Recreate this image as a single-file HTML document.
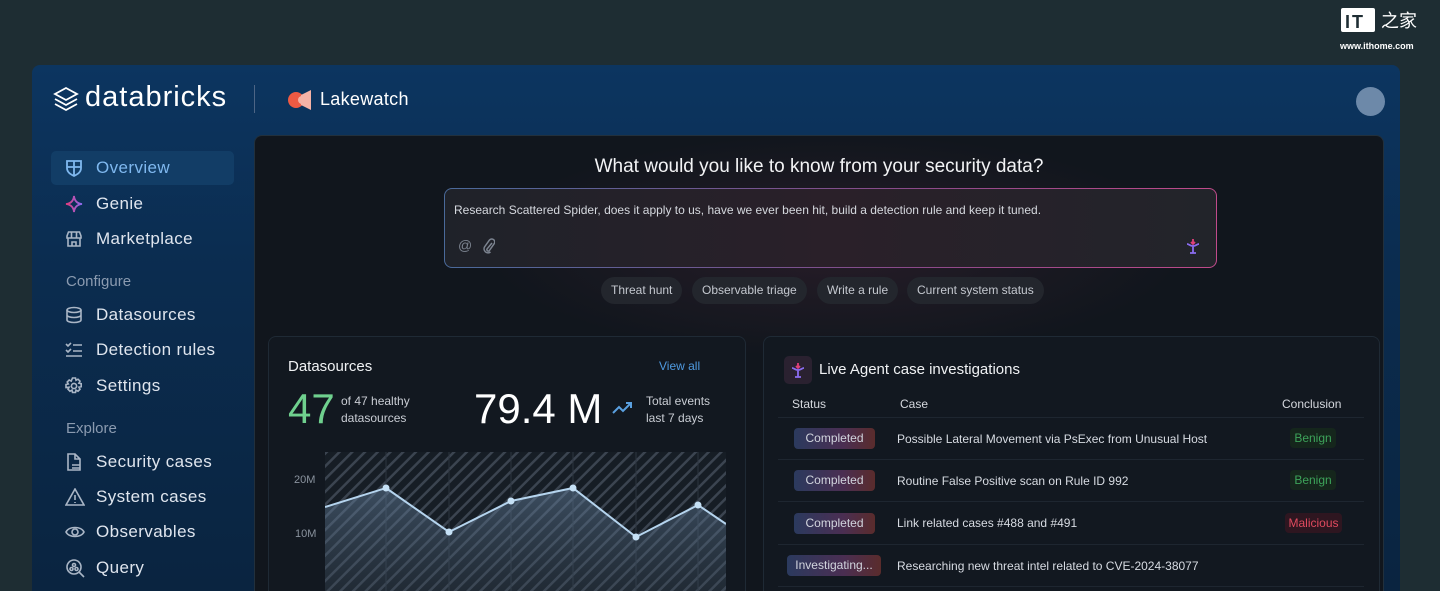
<!DOCTYPE html>
<html><head><meta charset="utf-8"><style>
*{margin:0;padding:0;box-sizing:border-box}
html,body{width:1440px;height:591px;overflow:hidden}
body{background:#1e2d33;font-family:"Liberation Sans",sans-serif;position:relative;color:#e6e9ee}
.panel{position:absolute;left:32px;top:65px;width:1368px;height:526px;border-radius:8px 8px 0 0;background:linear-gradient(180deg,#0c3560 0%,#0b2c4f 40%,#0a2440 100%)}
.abs{position:absolute}
.nav{position:absolute;left:51px;width:183px;height:34px;display:flex;align-items:center;font-size:17px;color:#dfe5ee;letter-spacing:.4px}
.nav svg{position:absolute;left:14px}
.nav span{position:absolute;left:45px}
.sec{position:absolute;left:66px;font-size:15px;color:#8b9bb0}
.main{position:absolute;left:254px;top:135px;width:1130px;height:456px;border-radius:8px 8px 0 0;background:radial-gradient(ellipse 500px 160px at 580px 110px,rgba(80,40,60,.35),transparent 70%),#11161d;border:1px solid #22303c;border-bottom:none}
.card{position:absolute;border-radius:8px 8px 0 0;border:1px solid #1f2a35;border-bottom:none;background:#121820}
.chip{position:absolute;top:277px;height:27px;border-radius:14px;background:#23262d;color:#c4c8cf;font-size:12px;line-height:27px;padding:0 10px}
.st{position:absolute;height:21px;border-radius:4px;font-size:12px;line-height:21px;text-align:center;color:#d2d5de;background:linear-gradient(90deg,#2b3a5e,#4a2e52 60%,#5a2c2c)}
.row{position:absolute;left:897px;font-size:12px;color:#d7dbe2}
.con{position:absolute;height:20px;line-height:20px;font-size:12px;border-radius:4px;text-align:center}
.hr{position:absolute;left:778px;width:586px;height:1px;background:#1e2630}
</style></head><body>
<div class="panel"></div>
<div class="abs" style="left:1341px;top:8px;width:34px;height:24px;background:#fff;border-radius:2px"></div>
<div class="abs" style="left:1345px;top:12px;font:bold 18px 'Liberation Sans';color:#1e2d33;letter-spacing:2px">IT</div>
<div class="abs" style="left:1381px;top:9px;font:18px 'Noto Sans CJK SC',sans-serif;color:#fff;line-height:22px">之家</div>
<div class="abs" style="left:1340px;top:41px;font:bold 9px 'Liberation Sans';color:#fff">www.ithome.com</div>
<svg class="abs" style="left:53px;top:86px" width="26" height="26" viewBox="0 0 26 26" fill="none" stroke="#fff" stroke-width="1.8"><path d="M13 2 24 8 13 14 2 8Z"/><path d="M2 13l11 6 11-6M2 18l11 6 11-6"/></svg>
<div class="abs" style="left:85px;top:81px;font-size:29px;color:#fff;letter-spacing:1px">databricks</div>
<div class="abs" style="left:254px;top:85px;width:1px;height:28px;background:#4d6585"></div>
<svg class="abs" style="left:287px;top:89px" width="26" height="22" viewBox="0 0 26 22"><circle cx="9" cy="11" r="8" fill="#ef5a43"/><path d="M14 6 24 1V21L14 16Z" fill="#f6b3a6"/><circle cx="15" cy="11" r="4" fill="#f6b3a6"/></svg>
<div class="abs" style="left:320px;top:89px;font-size:18px;color:#fff;letter-spacing:.3px">Lakewatch</div>
<div class="abs" style="left:1356px;top:87px;width:29px;height:29px;border-radius:50%;background:#6d89a9"></div>
<div class="nav" style="top:151px;background:#123d66;border-radius:5px;color:#7fb8ef"><svg width="18" height="18" viewBox="0 0 18 18" fill="none" stroke="#7fb8ef" stroke-width="1.8"><path d="M2 2h14v7c0 4-3 6-7 8-4-2-7-4-7-8Z M9 2v15 M2 8h14"/></svg><span>Overview</span></div>
<div class="nav" style="top:187px"><svg width="18" height="18" viewBox="0 0 18 18" fill="none" stroke-width="1.8"><defs><linearGradient id="g"><stop offset="0" stop-color="#e03a7a"/><stop offset="1" stop-color="#8a6cf0"/></linearGradient></defs><path d="M9 1C9.5 6 12 8.5 17 9 12 9.5 9.5 12 9 17 8.5 12 6 9.5 1 9 6 8.5 8.5 6 9 1Z" stroke="url(#g)"/></svg><span>Genie</span></div>
<div class="nav" style="top:222px"><svg width="18" height="18" viewBox="0 0 18 18" fill="none" stroke="#aab6c6" stroke-width="1.6"><path d="M2 6 3.5 2h11L16 6v2H2Z M3 8v8h12V8 M7 16v-4h4v4 M6.5 2v6 M11.5 2v6"/></svg><span>Marketplace</span></div>
<div class="sec" style="top:273px">Configure</div>
<div class="nav" style="top:298px"><svg width="18" height="18" viewBox="0 0 18 18" fill="none" stroke="#aab6c6" stroke-width="1.6"><ellipse cx="9" cy="4" rx="7" ry="2.5"/><path d="M2 4v10c0 1.4 3 2.5 7 2.5s7-1.1 7-2.5V4M2 9c0 1.4 3 2.5 7 2.5S16 10.4 16 9"/></svg><span>Datasources</span></div>
<div class="nav" style="top:333px"><svg width="18" height="18" viewBox="0 0 18 18" fill="none" stroke="#aab6c6" stroke-width="1.6"><path d="M1 3l2 2 3-3M1 9l2 2 3-3M8 4h9M8 10h9M1 15h16"/></svg><span>Detection rules</span></div>
<div class="nav" style="top:369px"><svg width="18" height="18" viewBox="0 0 18 18" fill="none" stroke="#aab6c6" stroke-width="1.6"><circle cx="9" cy="9" r="2.6"/><path d="M7.5 1h3l.5 2.3 2-1.1 2 2-1.1 2 2.3.5v3l-2.3.5 1.1 2-2 2-2-1.1-.5 2.3h-3l-.5-2.3-2 1.1-2-2 1.1-2L1 10.5v-3l2.3-.5-1.1-2 2-2 2 1.1Z"/></svg><span>Settings</span></div>
<div class="sec" style="top:420px">Explore</div>
<div class="nav" style="top:445px"><svg width="18" height="18" viewBox="0 0 18 18" fill="none" stroke="#aab6c6" stroke-width="1.6"><path d="M3 17V1h7l5 5v11Z M10 1v5h5 M7 12h8M7 15h8"/></svg><span>Security cases</span></div>
<div class="nav" style="top:480px"><svg width="20" height="18" viewBox="0 0 20 18" fill="none" stroke="#aab6c6" stroke-width="1.6"><path d="M10 1 19 17H1Z M10 7v5M10 14v1"/></svg><span>System cases</span></div>
<div class="nav" style="top:515px"><svg width="20" height="18" viewBox="0 0 20 18" fill="none" stroke="#aab6c6" stroke-width="1.6"><path d="M1 9C4 3 16 3 19 9 16 15 4 15 1 9Z"/><circle cx="10" cy="9" r="3"/></svg><span>Observables</span></div>
<div class="nav" style="top:551px"><svg width="20" height="20" viewBox="0 0 20 20" fill="none" stroke="#aab6c6" stroke-width="1.6"><circle cx="9" cy="9" r="7"/><path d="M14 14l5 5"/><circle cx="9" cy="7" r="1.5"/><circle cx="6.5" cy="11" r="1.5"/><circle cx="11.5" cy="11" r="1.5"/></svg><span>Query</span></div>
<div class="main"></div>
<div class="abs" style="left:254px;width:1130px;top:156px;text-align:center;font-size:19px;color:#f2f3f5">What would you like to know from your security data?</div>
<div class="abs" style="left:444px;top:188px;width:773px;height:80px;border-radius:8px;padding:1px;background:linear-gradient(90deg,#4a6a9a,#8a4a8a 60%,#c04a8a)"><div style="width:100%;height:100%;border-radius:7px;background:linear-gradient(90deg,#1f2229,#2a2029 50%,#22242a)"></div></div>
<div class="abs" style="left:454px;top:203px;font-size:12px;color:#d5d8de">Research Scattered Spider, does it apply to us, have we ever been hit, build a detection rule and keep it tuned.</div>
<div class="abs" style="left:458px;top:237px;font-size:14px;color:#7c8490">@</div>
<svg class="abs" style="left:483px;top:238px" width="12" height="16" viewBox="0 0 12 16" fill="none" stroke="#7c8490" stroke-width="1.5"><path d="M9 5 4 11a1.5 1.5 0 0 0 2 2l5-7a3 3 0 0 0-4.5-4L1.5 9a4 4 0 0 0 6 5"/></svg>
<svg class="abs" style="left:1185px;top:238px" width="16" height="16" viewBox="0 0 16 16" fill="none" stroke-width="1.8"><path d="M2 6c2 0 3 2 6 2s4-2 6-2M8 8v7M5 15h6" stroke="#8a6cf0"/><path d="M8 1v5M6 4l2 2 2-2" stroke="#e0407a"/></svg>
<div class="chip" style="left:601px">Threat hunt</div>
<div class="chip" style="left:692px">Observable triage</div>
<div class="chip" style="left:817px">Write a rule</div>
<div class="chip" style="left:907px">Current system status</div>
<div class="card" style="left:268px;top:336px;width:478px;height:255px"></div>
<div class="abs" style="left:288px;top:358px;font-size:15px;color:#f0f2f4">Datasources</div>
<div class="abs" style="left:659px;top:359px;font-size:12px;color:#4f9ae0">View all</div>
<div class="abs" style="left:288px;top:386px;font-size:42px;color:#6fd08e;line-height:46px">47</div>
<div class="abs" style="left:341px;top:393px;font-size:12px;color:#c9cdd4;line-height:17px">of 47 healthy<br>datasources</div>
<div class="abs" style="left:474px;top:386px;font-size:42px;color:#fff;line-height:46px">79.4 M</div>
<svg class="abs" style="left:612px;top:401px" width="22" height="14" viewBox="0 0 22 14" fill="none" stroke="#5aa0e0" stroke-width="2"><path d="M1 12 7 6l4 4 8-8M14 2h5v5"/></svg>
<div class="abs" style="left:646px;top:393px;font-size:12px;color:#c9cdd4;line-height:17px">Total events<br>last 7 days</div>
<div class="abs" style="left:294px;top:474px;font-size:11px;color:#8a939e">20M</div>
<div class="abs" style="left:295px;top:528px;font-size:11px;color:#8a939e">10M</div>
<svg class="abs" style="left:325px;top:452px" width="401" height="139" viewBox="0 0 401 139">
<defs><pattern id="h" width="9" height="9" patternUnits="userSpaceOnUse" patternTransform="rotate(45)"><rect width="9" height="9" fill="#161d25"/><rect width="2.5" height="9" fill="#3b4450"/></pattern>
<linearGradient id="a" x1="0" y1="0" x2="0" y2="1"><stop offset="0" stop-color="#6a88a8" stop-opacity=".45"/><stop offset="1" stop-color="#3a4a5a" stop-opacity=".3"/></linearGradient></defs>
<rect width="401" height="139" fill="url(#h)"/>
<g stroke="#2c3540" stroke-width="1"><path d="M61 0v139M124 0v139M186 0v139M248 0v139M311 0v139M373 0v139"/></g>
<path d="M0 55 61 36 124 80 186 49 248 36 311 85 373 53 401 72V139H0Z" fill="url(#a)"/>
<path d="M0 55 61 36 124 80 186 49 248 36 311 85 373 53 401 72" fill="none" stroke="#b5d4ee" stroke-width="2"/>
<g fill="#c5e0f5"><circle cx="61" cy="36" r="3.5"/><circle cx="124" cy="80" r="3.5"/><circle cx="186" cy="49" r="3.5"/><circle cx="248" cy="36" r="3.5"/><circle cx="311" cy="85" r="3.5"/><circle cx="373" cy="53" r="3.5"/></g>
</svg>
<div class="card" style="left:763px;top:336px;width:617px;height:255px"></div>
<div class="abs" style="left:784px;top:356px;width:28px;height:28px;border-radius:5px;background:#2a2130"></div>
<svg class="abs" style="left:790px;top:362px" width="16" height="16" viewBox="0 0 16 16" fill="none" stroke-width="1.8"><path d="M2 6c2 0 3 2 6 2s4-2 6-2M8 8v7M5 15h6" stroke="#8a6cf0"/><path d="M8 1v5M6 4l2 2 2-2" stroke="#e0407a"/></svg>
<div class="abs" style="left:819px;top:361px;font-size:15px;color:#f0f2f4">Live Agent case investigations</div>
<div class="abs" style="left:792px;top:397px;font-size:12px;color:#d5d8de">Status</div>
<div class="abs" style="left:900px;top:397px;font-size:12px;color:#d5d8de">Case</div>
<div class="abs" style="left:1282px;top:397px;font-size:12px;color:#d5d8de">Conclusion</div>
<div class="hr" style="top:417px"></div>
<div class="hr" style="top:459px"></div>
<div class="hr" style="top:501px"></div>
<div class="hr" style="top:544px"></div>
<div class="hr" style="top:586px"></div>
<div class="st" style="left:794px;top:428px;width:81px">Completed</div>
<div class="st" style="left:794px;top:470px;width:81px">Completed</div>
<div class="st" style="left:794px;top:513px;width:81px">Completed</div>
<div class="st" style="left:787px;top:555px;width:94px">Investigating...</div>
<div class="row" style="top:432px">Possible Lateral Movement via PsExec from Unusual Host</div>
<div class="row" style="top:474px">Routine False Positive scan on Rule ID 992</div>
<div class="row" style="top:516px">Link related cases #488 and #491</div>
<div class="row" style="top:559px">Researching new threat intel related to CVE-2024-38077</div>
<div class="con" style="left:1290px;top:428px;width:46px;background:#15261c;color:#3da35a">Benign</div>
<div class="con" style="left:1290px;top:470px;width:46px;background:#15261c;color:#3da35a">Benign</div>
<div class="con" style="left:1285px;top:513px;width:57px;background:#2e1620;color:#e04a5e">Malicious</div>
</body></html>
